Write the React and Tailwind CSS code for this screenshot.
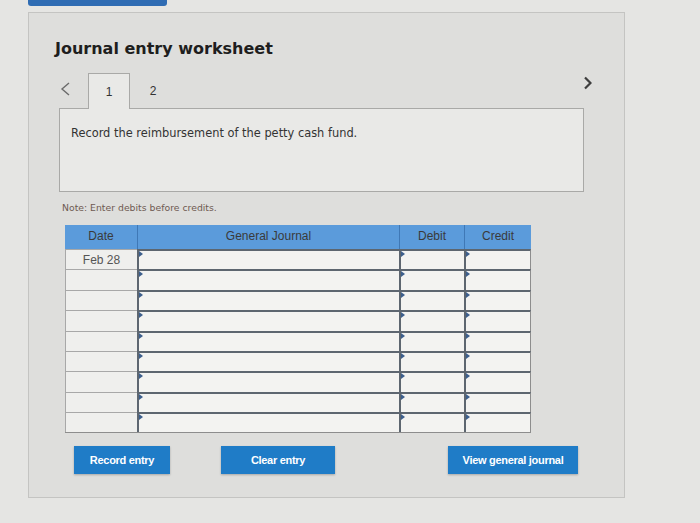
import React from 'react'

const rows = ['Feb 28', '', '', '', '', '', '', '', '']

// input cell with the little dropdown marker in the corner
const InputCell = ({ className }) => (
  <div className={`relative h-full border-t-2 border-l-2 border-[#5d6670] bg-[#f3f3f1] ${className}`}>
    <span className="absolute left-0 top-0 h-0 w-0 border-y-[3px] border-l-[4px] border-y-transparent border-l-[#3d5f8c]" />
  </div>
)

const Button = ({ children, className }) => (
  <button
    className={`h-[28px] bg-[#1f7cc7] text-[11px] font-bold tracking-[-0.3px] text-white shadow-[0_1px_2px_rgba(0,0,0,0.25)] ${className}`}
    style={{ fontFamily: '"Liberation Sans", Arial, sans-serif' }}
  >
    {children}
  </button>
)

export default function App() {
  return (
    <div className="min-h-screen w-[700px] bg-[#e5e5e3] overflow-hidden" style={{ fontFamily: '"DejaVu Sans", Verdana, sans-serif' }}>
      <div className="ml-[28px] h-[6px] w-[139px] rounded-b-[3px] bg-[#2f6cb3]" />

      {/* Worksheet card */}
      <div className="ml-[28px] mt-[6px] h-[486px] w-[597px] border border-[#c4c4c2] bg-[#dededc] pl-[30px] pr-[40px] pt-[25px]">
        <h1 className="-ml-[4px] text-[16px] font-bold leading-[21px] text-[#1e1e1e]">Journal entry worksheet</h1>

        {/* Tabs */}
        <div className="mt-[14px] flex h-[35px] items-end">
          <div className="mb-[12px] w-[29px] pl-[1px]">
            <svg width="11" height="14" viewBox="0 0 11 14" fill="none" stroke="#6b6b6b" strokeWidth="1.4">
              <path d="M9 1 L2 7 L9 13" />
            </svg>
          </div>
          <div className="relative -mb-px flex h-[36px] w-[42px] items-center justify-center border border-b-0 border-[#a9a9a7] bg-[#e9e9e7] text-[12px] text-[#333]" style={{ fontFamily: '"Liberation Sans", Arial, sans-serif' }}>
            1
          </div>
          <div className="flex h-[35px] w-[46px] items-center justify-center text-[12px] text-[#333]" style={{ fontFamily: '"Liberation Sans", Arial, sans-serif' }}>
            2
          </div>
          <div className="mb-[18px] ml-auto mr-[-8px]">
            <svg width="9" height="14" viewBox="0 0 9 14" fill="none" stroke="#3e3e3e" strokeWidth="2.2">
              <path d="M2 1.5 L7.5 7 L2 12.5" />
            </svg>
          </div>
        </div>

        {/* Question box */}
        <div className="h-[84px] w-[525px] border border-[#a9a9a7] bg-[#e9e9e7] px-[11px] pt-[16px]">
          <p className="text-[11.4px] text-[#333]">Record the reimbursement of the petty cash fund.</p>
        </div>

        <p className="mt-[9px] pl-[3px] text-[9.3px] text-[#6e5a52]">Note: Enter debits before credits.</p>

        {/* Journal table */}
        <div className="ml-[6px] mt-[10px] w-[466px] text-[11px] text-[#3a3a3a]" style={{ fontFamily: '"Liberation Sans", Arial, sans-serif' }}>
          <div className="grid h-[24px] grid-cols-[72px_262px_65px_67px] bg-[#5b9bdb] text-[12px]">
            <div className="flex items-center justify-center pb-[2px]">Date</div>
            <div className="flex items-center justify-center border-l border-[#3f78b6] pb-[2px]">General Journal</div>
            <div className="flex items-center justify-center border-l border-[#3f78b6] pb-[2px]">Debit</div>
            <div className="flex items-center justify-center border-l border-[#3f78b6] pb-[2px]">Credit</div>
          </div>
          <div className="border-b border-r border-[#8d8d8d]">
            {rows.map((date, i) => (
              <div key={i} className="grid h-[20.4px] grid-cols-[72px_262px_65px_67px]">
                <div className="flex items-center justify-center border-l border-t border-[#a8a8a8] bg-[#efefed] text-[12px] text-[#555]">
                  {date}
                </div>
                <InputCell />
                <InputCell />
                <InputCell className="border-r border-r-[#8d8d8d]" />
              </div>
            ))}
          </div>
        </div>

        {/* Actions */}
        <div className="mt-[13px] flex items-center">
          <Button className="ml-[15px] w-[96px]">Record entry</Button>
          <Button className="ml-[51px] w-[114px]">Clear entry</Button>
          <Button className="ml-[113px] w-[130px]">View general journal</Button>
        </div>
      </div>
    </div>
  )
}
